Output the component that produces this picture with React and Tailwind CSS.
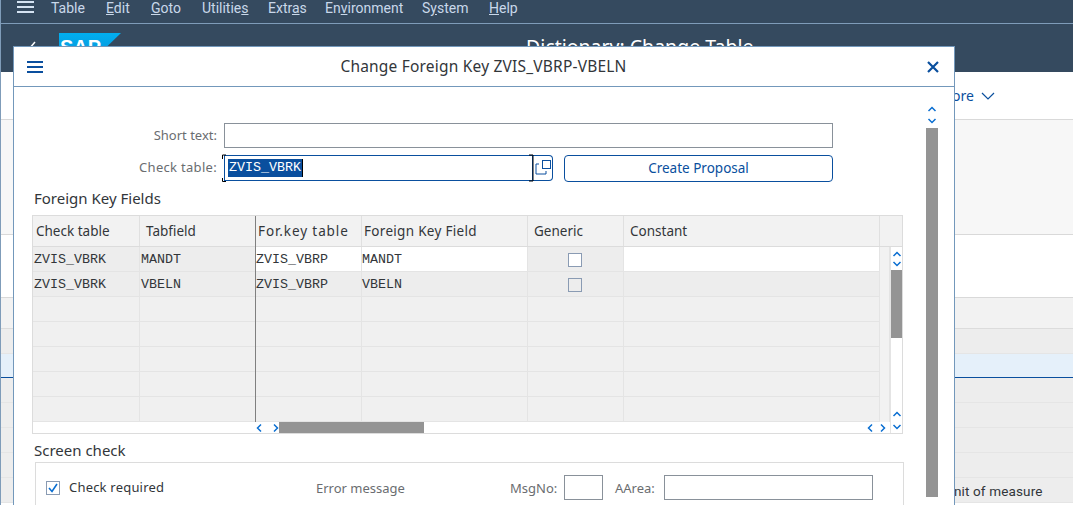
import React from 'react'

// [text before mnemonic, underlined letter, text after, slot width]
const menuItems = [
  ['Table', '', '', 'w-[55px]'],
  ['', 'E', 'dit', 'w-[45px]'],
  ['', 'G', 'oto', 'w-[51px]'],
  ['Utilitie', 's', '', 'w-[66px]'],
  ['Extr', 'a', 's', 'w-[57px]'],
  ['En', 'v', 'ironment', 'w-[97px]'],
  ['S', 'y', 'stem', 'w-[67px]'],
  ['', 'H', 'elp', 'w-[40px]'],
]

const columns = ['w-[107px]', 'w-[116px]', 'w-[106px]', 'w-[166px]', 'w-[96px]', 'w-[256px]']
const headers = [
  ['Check table', 'pl-[3px]'],
  ['Tabfield', 'pl-[6px]'],
  ['For.key table', 'pl-[2px] tracking-[0.9px]'],
  ['Foreign Key Field', 'pl-[2px] tracking-[0.3px]'],
  ['Generic', 'pl-[6px]'],
  ['Constant', 'pl-[6px]'],
]
const cellPad = ['pl-[1px]', 'pl-[1px]', 'pl-0', 'pl-0', 'pl-0', 'pl-0']
const rows = [
  ['ZVIS_VBRK', 'MANDT', 'ZVIS_VBRP', 'MANDT'],
  ['ZVIS_VBRK', 'VBELN', 'ZVIS_VBRP', 'VBELN'],
  [], [], [], [], [],
]
const mono = 'font-["Liberation_Mono",monospace] text-[13.33px]'

const Chevron = ({ d }) => (
  <svg width="10" height="6" viewBox="0 0 10 6" className="text-[#0a6ed1]">
    <path d={d} fill="none" stroke="currentColor" strokeWidth="1.5" />
  </svg>
)
const Up = () => <Chevron d="M1.5 5 5 1.5 8.5 5" />
const Down = () => <Chevron d="M1.5 1 5 4.5 8.5 1" />
const Side = ({ d }) => (
  <svg width="6" height="10" viewBox="0 0 6 10" className="text-[#0a6ed1]">
    <path d={d} fill="none" stroke="currentColor" strokeWidth="1.5" />
  </svg>
)
const Left = () => <Side d="M5 1.5 1.5 5 5 8.5" />
const Right = () => <Side d="M1 1.5 4.5 5 1 8.5" />

const Background = () => (
  <div className="flex flex-col h-[505px] border-l border-[#7f9cb9]">
    <div className="h-[24px] bg-[#354a5f] border-b border-[#7f9cb9] flex items-start font-['Roboto',sans-serif] text-[14px] leading-[15px] text-[#c9d8ea]">
      <div className="w-[50px] pl-[16px] pt-[1px] shrink-0">
        <div className="w-[17px] h-[12px] flex flex-col justify-between">
          <div className="h-[2px] bg-[#d5e3f2]" />
          <div className="h-[2px] bg-[#d5e3f2]" />
          <div className="h-[2px] bg-[#d5e3f2]" />
        </div>
      </div>
      <div className="flex pt-[1px]">
        {menuItems.map(([before, mark, after, width]) => (
          <span key={before + mark} className={`${width} shrink-0`}>
            {before}{mark && <u>{mark}</u>}{after}
          </span>
        ))}
      </div>
    </div>
    <div className="h-[48px] bg-[#354a5f] flex items-start">
      <svg width="10" height="16" viewBox="0 0 10 16" className="ml-[26px] mt-[17px] text-white shrink-0">
        <path d="M8 1 2 8l6 7" fill="none" stroke="currentColor" strokeWidth="1.5" />
      </svg>
      <div className="ml-[22px] mt-[9px] w-[62px] h-[30px] shrink-0 bg-[linear-gradient(#00aeef,#0a8fd6)] [clip-path:polygon(0_0,100%_0,50%_100%,0_100%)] text-white font-['Liberation_Sans',sans-serif] font-bold text-[20px] leading-[28px] pl-[1px]">
        SAP
      </div>
      <div className="ml-[405px] mt-[11px] text-[19.5px] leading-[24px] text-white font-['Noto_Sans',sans-serif] whitespace-nowrap">
        Dictionary: Change Table
      </div>
    </div>
    <div className="h-[48px] bg-white border-b border-[#d9d9d9] flex items-center justify-end pr-[78px] text-[14px] text-[#0a4f9e] gap-[7px]">
      <span className="pb-[1px]">More</span>
      <svg width="14" height="8" viewBox="0 0 14 8"><path d="M1 1l6 6 6-6" fill="none" stroke="#0a4f9e" strokeWidth="1.2" /></svg>
    </div>
    <div className="h-[115px] bg-[#f7f7f7] border-b border-[#d9d9d9]" />
    <div className="h-[63px] bg-white border-b border-[#d9d9d9]" />
    <div className="h-[31px] bg-[#f2f2f2] border-b border-[#dcdcdc]" />
    <div className="h-[25px] bg-[#ededed] border-b border-[#e5e5e5]" />
    <div className="h-[24px] bg-[#e5f0fa] border-b border-[#0a4f9e]" />
    {[0, 1, 2, 3, 4].map((i) => (
      <div key={i} className="h-[25px] bg-[#ededed] border-b border-[#e5e5e5] pl-[944px] font-['Roboto',sans-serif] text-[13.5px] leading-[24px] text-[#32363a] whitespace-nowrap overflow-hidden">
        {i === 4 ? <span className="relative top-[1px] tracking-[0.15px]">Unit of measure</span> : null}
      </div>
    ))}
  </div>
)

const FieldTable = () => (
  <div className="relative w-[871px] h-[219px] border border-[#dcdcdc] ml-[18px] flex flex-col text-[#32363a]">
    <div className="flex h-[31px] bg-[#f2f2f2] border-b border-[#dcdcdc] shrink-0 text-[13.5px]">
      {headers.map(([h, pad], i) => (
        <div key={h} className={`${columns[i]} shrink-0 border-r border-[#e0e0e0] ${pad} leading-[31px] whitespace-nowrap`}>
          {h}
        </div>
      ))}
    </div>
    <div className="flex flex-1 min-h-0">
      <div className="w-[857px] flex flex-col">
        {rows.map((r, i) => (
          <div key={i} className="flex h-[25px] shrink-0">
            <div className="flex w-[847px] border-b border-[#e4e4e4]">
              {columns.map((c, j) => {
                const white = i === 0 && (j === 2 || j === 3 || j === 5)
                const bg = white ? 'bg-white' : i < 2 ? 'bg-[#ededed]' : 'bg-[#f0f0f0]'
                return (
                  <div key={j} className={`${c} shrink-0 border-r border-[#e4e4e4] ${bg} ${mono} leading-[23px] ${cellPad[j]} pt-[1px] flex items-center`}>
                    {j === 4 && i < 2 ? (
                      <div className={`w-[14px] h-[14px] ml-[40px] border border-[#8a9bb3] ${i === 0 ? 'bg-white' : 'bg-[#ededed]'}`} />
                    ) : r[j]}
                  </div>
                )
              })}
            </div>
            <div className="w-[10px] bg-[#f2f2f2] border-r border-[#e4e4e4]" />
          </div>
        ))}
        <div className="flex-1 bg-white flex items-center">
          <div className="w-[223px] shrink-0" />
          <div className="w-[23px] flex justify-between items-center shrink-0"><Left /><Right /></div>
          <div className="w-[145px] h-full bg-[#949494]" />
          <div className="flex-1" />
          <div className="flex gap-[7px] mr-[4px] items-center"><Left /><Right /></div>
        </div>
      </div>
      <div className="w-[12px] border-l border-[#e4e4e4] flex flex-col items-center pt-[4px] bg-white">
        <Up />
        <div className="mt-[4px]"><Down /></div>
        <div className="w-[11px] h-[68px] bg-[#949494] mt-[3px]" />
        <div className="flex-1" />
        <Up />
        <div className="mt-[7px] mb-[3px]"><Down /></div>
      </div>
    </div>
    {/* split line between fixed and scrolling columns */}
    <div className="absolute left-[222px] top-0 w-px h-[206px] bg-[#808080]" />
  </div>
)

const Dialog = () => (
  <div className="absolute left-[13px] top-[46px] w-[942px] h-[470px] bg-white border border-[#7398bb] font-['Noto_Sans',sans-serif] text-[13px] text-[#32363a]">
    <div className="h-[40px] border-b border-[#7398bb] flex items-center">
      <div className="ml-[13px] w-[16px] h-[12px] flex flex-col justify-between">
        <div className="h-[2px] bg-[#0a4f9e]" />
        <div className="h-[2px] bg-[#0a4f9e]" />
        <div className="h-[2px] bg-[#0a4f9e]" />
      </div>
      <div className="flex-1 text-center text-[15.5px] tracking-[0.2px] pr-[3px]">Change Foreign Key ZVIS_VBRP-VBELN</div>
      <svg width="12" height="12" viewBox="0 0 12 12" className="mr-[15px]">
        <path d="M1 1l10 10M11 1 1 11" stroke="#0a4f9e" strokeWidth="2.2" fill="none" />
      </svg>
    </div>
    <div className="flex">
      <div className="w-[912px] shrink-0">
        <div className="flex items-center mt-[36px] h-[25px]">
          <div className="w-[203px] text-right text-[#6a6d70]">Short text:</div>
          <div className="ml-[7px] w-[609px] h-[25px] border border-[#89919a] bg-white" />
        </div>
        <div className="flex items-center mt-[7px] h-[26px]">
          <div className="w-[203px] text-right text-[#6a6d70] tracking-[0.3px]">Check table:</div>
          <div className="relative ml-[7px] w-[309px] h-[26px] border border-[#0a4f9e] bg-white flex items-center pl-[3px] shrink-0">
            <span className={`bg-[#0a4f9e] text-white ${mono} leading-[18px] px-[1px] border-r border-black`}>ZVIS_VBRK</span>
            <svg width="316" height="28" viewBox="0 0 316 28" className="absolute left-[-4px] top-[-2px] overflow-visible">
              <path d="M5 1H1.5v4M1.5 24v3.5H5M308 1h4v26h-4" fill="none" stroke="#000" strokeWidth="1" />
            </svg>
          </div>
          <div className="w-[20px] h-[26px] border border-[#0a4f9e] border-l-0 rounded-r-[4px] bg-white shrink-0 flex items-center justify-center">
            <svg width="18" height="18" viewBox="0 0 18 18">
              <path d="M5 5H2v10h10v-3" fill="none" stroke="#0a4f9e" />
              <rect x="8.5" y="1.5" width="8" height="8" fill="none" stroke="#0a4f9e" />
            </svg>
          </div>
          <div className="ml-[11px] w-[269px] h-[27px] border border-[#0a4f9e] rounded-[4px] text-[#0a4f9e] text-[13.5px] flex items-center justify-center">
            Create Proposal
          </div>
        </div>
        <div className="ml-[20px] mt-[7px] h-[20px] text-[15px] leading-[20px]">Foreign Key Fields</div>
        <div className="mt-[7px]"><FieldTable /></div>
        <div className="ml-[20px] mt-[6px] h-[20px] text-[15px] leading-[20px]">Screen check</div>
        <div className="ml-[21px] mt-[2px] w-[869px] h-[60px] border border-[#dcdcdc] flex items-start">
          <div className="ml-[10px] mt-[18px] w-[14px] h-[14px] border border-[#8a9bb3] bg-white flex items-center justify-center shrink-0">
            <svg width="12" height="12" viewBox="0 0 12 12"><path d="M2 6l3 3.5L10 2" fill="none" stroke="#0a6ed1" strokeWidth="1.6" /></svg>
          </div>
          <div className="ml-[9px] mt-[14px] w-[247px] shrink-0 leading-[20px] tracking-[0.2px]">Check required</div>
          <div className="mt-[15px] w-[194px] shrink-0 leading-[20px] text-[#6a6d70]">Error message</div>
          <div className="mt-[15px] w-[54px] shrink-0 leading-[20px] text-[#6a6d70]">MsgNo:</div>
          <div className="mt-[12px] w-[39px] h-[25px] border border-[#89919a] shrink-0" />
          <div className="ml-[12px] mt-[15px] w-[49px] shrink-0 leading-[20px] text-[#6a6d70]">AArea:</div>
          <div className="mt-[12px] w-[209px] h-[25px] border border-[#89919a] shrink-0" />
        </div>
      </div>
      <div className="w-[12px] shrink-0 flex flex-col items-center pt-[19px]">
        <Up />
        <div className="mt-[6px]"><Down /></div>
        <div className="w-[12px] h-[369px] bg-[#949494] mt-[4px]" />
      </div>
    </div>
  </div>
)

export default function App() {
  return (
    <div className="relative w-[1073px] h-[505px] overflow-hidden bg-white font-['Noto_Sans',sans-serif]">
      <Background />
      <Dialog />
    </div>
  )
}
